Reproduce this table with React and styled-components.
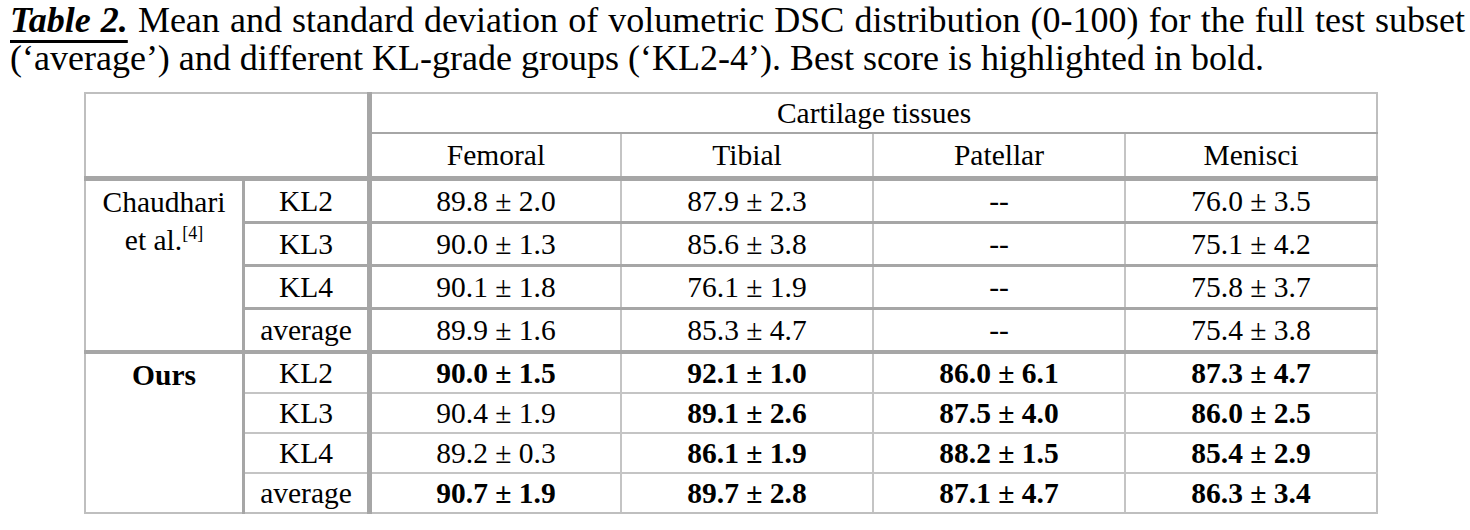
import React from "react";
import styled, { createGlobalStyle } from "styled-components";

const SERIF = `"Liberation Serif", "Times New Roman", Tinos, serif`;

const GlobalStyle = createGlobalStyle`
  html, body { margin: 0; padding: 0; background: #ffffff; }
  body { font-family: ${SERIF}; color: #000; }
`;

const DARK = "#a6a6a6";
const LIGHT = "#c4c4c4";
const OUTER = "#bfbfbf";

const Page = styled.div`
  width: 1470px;
  height: 530px;
  overflow: hidden;
  box-sizing: border-box;
  padding: 1px 0 0 10px;
  font-family: ${SERIF};
`;

const Caption = styled.p`
  margin: 0;
  width: 1455px;
  font-family: ${SERIF};
  font-size: 36px;
  line-height: 38px;
  text-align: justify;
  text-align-last: left;
`;

const Label = styled.span`
  font-weight: bold;
  font-style: italic;
  text-decoration: underline;
  text-decoration-thickness: 3px;
  text-underline-offset: 8px;
`;

const TableWrap = styled.div`
  margin: 15px 0 0 74px;
`;

const Table = styled.table`
  border-collapse: collapse;
  table-layout: fixed;
  width: 1293px;
  font-family: ${SERIF};
  font-size: 29.5px;
`;

const Col = styled.col`
  width: ${(p) => p.$w}px;
`;

const Cell = styled.td`
  padding: 0;
  text-align: center;
  vertical-align: ${(p) => (p.$top ? "top" : "middle")};
  font-weight: ${(p) => (p.$bold ? "bold" : "normal")};
  line-height: 38px;
  border-top: ${(p) => p.$bt || "none"};
  border-bottom: ${(p) => p.$bb || "none"};
  border-left: ${(p) => p.$bl || "none"};
  border-right: ${(p) => p.$br || "none"};
  padding-top: ${(p) => p.$pt || 0}px;
`;

const Row = styled.tr`
  height: ${(p) => p.$h}px;
`;

const Sup = styled.sup`
  font-size: 18px;
  vertical-align: 11px;
  line-height: 0;
`;

const b = (w, c) => `${w}px solid ${c}`;

const groups = [
  {
    name: (
      <>
        Chaudhari
        <br />
        et al.<Sup>[4]</Sup>
      </>
    ),
    bold: false,
    sep: b(3, DARK),
    heights: [44, 43, 43, 43.5],
    rows: [
      ["KL2", [["89.8 ± 2.0"], ["87.9 ± 2.3"], ["--"], ["76.0 ± 3.5"]]],
      ["KL3", [["90.0 ± 1.3"], ["85.6 ± 3.8"], ["--"], ["75.1 ± 4.2"]]],
      ["KL4", [["90.1 ± 1.8"], ["76.1 ± 1.9"], ["--"], ["75.8 ± 3.7"]]],
      ["average", [["89.9 ± 1.6"], ["85.3 ± 4.7"], ["--"], ["75.4 ± 3.8"]]],
    ],
  },
  {
    name: "Ours",
    bold: true,
    sep: b(2, LIGHT),
    heights: [41, 40, 40, 39],
    rows: [
      ["KL2", [["90.0 ± 1.5", 1], ["92.1 ± 1.0", 1], ["86.0 ± 6.1", 1], ["87.3 ± 4.7", 1]]],
      ["KL3", [["90.4 ± 1.9"], ["89.1 ± 2.6", 1], ["87.5 ± 4.0", 1], ["86.0 ± 2.5", 1]]],
      ["KL4", [["89.2 ± 0.3"], ["86.1 ± 1.9", 1], ["88.2 ± 1.5", 1], ["85.4 ± 2.9", 1]]],
      ["average", [["90.7 ± 1.9", 1], ["89.7 ± 2.8", 1], ["87.1 ± 4.7", 1], ["86.3 ± 3.4", 1]]],
    ],
  },
];

const tissues = ["Femoral", "Tibial", "Patellar", "Menisci"];
const colWidths = [158.5, 126, 251.5, 252, 252, 252];

export default function App() {
  return (
    <Page>
      <GlobalStyle />
      <Caption>
        <Label>Table 2.</Label> Mean and standard deviation of volumetric DSC distribution (0-100) for the full test subset
        (‘average’) and different KL-grade groups (‘KL2-4’). Best score is highlighted in bold.
      </Caption>
      <TableWrap>
        <Table>
          <colgroup>
            {colWidths.map((w, i) => (
              <Col key={i} $w={w} />
            ))}
          </colgroup>
          <tbody>
            <Row $h={40}>
              <Cell
                colSpan={2}
                rowSpan={2}
                $bt={b(2, OUTER)}
                $bl={b(2, OUTER)}
                $br={b(5, DARK)}
                $bb={b(5, DARK)}
              />
              <Cell colSpan={4} $bt={b(2, OUTER)} $br={b(2, OUTER)} $bb={b(2, DARK)}>
                Cartilage tissues
              </Cell>
            </Row>
            <Row $h={45.5}>
              {tissues.map((t, i) => (
                <Cell
                  key={t}
                  $bb={b(5, DARK)}
                  $br={i === 3 ? b(2, OUTER) : b(2, LIGHT)}
                >
                  {t}
                </Cell>
              ))}
            </Row>
            {groups.map((g, gi) => {
              const last = gi === groups.length - 1;
              const groupBottom = last ? b(2, OUTER) : b(4, DARK);
              return g.rows.map(([kl, vals], ri) => {
                const lastRow = ri === g.rows.length - 1;
                const bottom = lastRow ? groupBottom : g.sep;
                return (
                  <Row key={`${gi}-${ri}`} $h={g.heights[ri]}>
                    {ri === 0 && (
                      <Cell
                        rowSpan={4}
                        $top
                        $bold={g.bold}
                        $pt={2}
                        $bl={b(2, OUTER)}
                        $br={b(3, DARK)}
                        $bb={groupBottom}
                      >
                        {g.name}
                      </Cell>
                    )}
                    <Cell $br={b(5, DARK)} $bb={bottom}>
                      {kl}
                    </Cell>
                    {vals.map(([v, bold], ci) => (
                      <Cell
                        key={ci}
                        $bold={!!bold}
                        $bb={bottom}
                        $br={ci === 3 ? b(2, OUTER) : b(2, LIGHT)}
                      >
                        {v}
                      </Cell>
                    ))}
                  </Row>
                );
              });
            })}
          </tbody>
        </Table>
      </TableWrap>
    </Page>
  );
}
